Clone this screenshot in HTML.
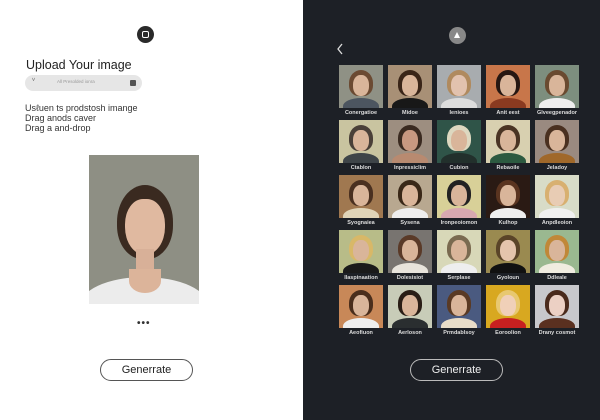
<!DOCTYPE html>
<html><head><meta charset="utf-8"><style>
*{margin:0;padding:0;box-sizing:border-box}
body{width:600px;height:420px;overflow:hidden;font-family:"Liberation Sans",sans-serif;background:#fff;position:relative}
.left{position:absolute;left:0;top:0;width:303px;height:420px;background:#fff}
.right{position:absolute;left:303px;top:0;width:297px;height:420px;background:#1d2026}
.ic{position:absolute;width:17px;height:17px;border-radius:50%}
h1{position:absolute;left:26px;top:58px;font-size:12.5px;font-weight:normal;color:#222}
.search{position:absolute;left:25px;top:75px;width:117px;height:16px;border-radius:8px;background:#e6e6e6}
.txt{position:absolute;left:25px;top:103px;font-size:9px;line-height:10px;color:#333}
.por{position:absolute;left:89px;top:155px;width:110px;height:149px;background:#8e8f84;overflow:hidden}
.dots{position:absolute;left:137px;top:318px;font-size:10px;letter-spacing:1px;color:#333;font-weight:bold}
.btn{position:absolute;top:359px;width:93px;height:22px;border-radius:11px;font-size:11px;text-align:center;line-height:20px}
.t{position:absolute;width:44px;height:43px;overflow:hidden}
.t .h{position:absolute;left:10px;top:5px;width:24px;height:26px;border-radius:50% 50% 40% 40%}
.t .f{position:absolute;left:14px;top:10px;width:16px;height:21px;border-radius:45%;background:#d9b59a}
.t .s{position:absolute;left:4px;top:33px;width:36px;height:16px;border-radius:50% 50% 0 0}
.l{position:absolute;width:60px;text-align:center;font-size:5.5px;color:#ddd;font-weight:bold}
</style></head><body>
<div class="left">
 <div class="ic" style="left:137px;top:26px;background:#2a2a2a"><div style="position:absolute;left:5px;top:5px;width:7px;height:7px;border:1.5px solid #fff;border-radius:2px"></div></div>
 <h1>Upload Your image</h1>
 <div class="search"><span style="position:absolute;left:7px;top:2px;font-size:7px;color:#555">ⱽ</span><span style="position:absolute;left:32px;top:4px;font-size:4.5px;color:#999">All  Presolded ionra</span><div style="position:absolute;left:105px;top:5px;width:6px;height:6px;background:#555;border-radius:1px"></div></div>
 <div class="txt">Usℓuen ts prodstosh imange<br>Drag anods caver<br>Drag a and-drop</div>
 <div class="por">
  <div style="position:absolute;left:28px;top:30px;width:56px;height:74px;border-radius:50% 50% 45% 45%;background:#3a2a20"></div>
  <div style="position:absolute;left:36px;top:44px;width:40px;height:56px;border-radius:45% 45% 50% 50%;background:#e0b9a0"></div>
  <div style="position:absolute;left:47px;top:94px;width:18px;height:30px;background:#d8b098"></div>
  <div style="position:absolute;left:-10px;top:122px;width:130px;height:60px;border-radius:50% 50% 0 0;background:#ececec"></div>
  <div style="position:absolute;left:40px;top:114px;width:32px;height:24px;border-radius:0 0 50% 50%;background:#dcb49a"></div>
 </div>
 <div class="dots">•••</div>
 <div class="btn" style="left:100px;border:1px solid #555;color:#222;background:#fff">Generrate</div>
</div>
<div class="right">
 <div class="ic" style="left:146px;top:27px;background:#888"><div style="position:absolute;left:5px;top:5px;width:0;height:0;border-left:3.5px solid transparent;border-right:3.5px solid transparent;border-bottom:6px solid #fff"></div></div>
 <svg style="position:absolute;left:33px;top:42px" width="8" height="14" viewBox="0 0 8 14"><path d="M6 2 L2 7 L6 12" stroke="#ddd" stroke-width="1.3" fill="none"/></svg>

 <div class="t" style="left:36px;top:65px;background:#8f9185"><div class="h" style="background:#6b4a32"></div><div class="f"></div><div class="s" style="background:#4c5560"></div></div>
 <div class="t" style="left:85px;top:65px;background:#a89076"><div class="h" style="background:#3a2518"></div><div class="f"></div><div class="s" style="background:#181818"></div></div>
 <div class="t" style="left:134px;top:65px;background:#a8acaf"><div class="h" style="background:#b08a5e"></div><div class="f" style="background:#e2c2ae"></div><div class="s" style="background:#ddd"></div></div>
 <div class="t" style="left:183px;top:65px;background:#c8764a"><div class="h" style="background:#261712"></div><div class="f"></div><div class="s" style="background:#8a3a20"></div></div>
 <div class="t" style="left:232px;top:65px;background:#7d8e7e"><div class="h" style="background:#6a4a30"></div><div class="f"></div><div class="s" style="background:#eee"></div></div>
 <div class="l" style="left:28px;top:110px">Conergatioe</div><div class="l" style="left:77px;top:110px">Midoe</div><div class="l" style="left:126px;top:110px">Ienioes</div><div class="l" style="left:175px;top:110px">Anit eest</div><div class="l" style="left:224px;top:110px">Glveegpenador</div>

 <div class="t" style="left:36px;top:120px;background:#c9c4a0"><div class="h" style="background:#4a4038"></div><div class="f"></div><div class="s" style="background:#3e4448"></div></div>
 <div class="t" style="left:85px;top:120px;background:#9d8e80"><div class="h" style="background:#3a2a20"></div><div class="f" style="background:#c89880"></div><div class="s" style="background:#b88a70"></div></div>
 <div class="t" style="left:134px;top:120px;background:#2f5448"><div class="h" style="background:#ddd8c0"></div><div class="f"></div><div class="s" style="background:#22302c"></div></div>
 <div class="t" style="left:183px;top:120px;background:#d8d0b0"><div class="h" style="background:#4a3424"></div><div class="f"></div><div class="s" style="background:#2c5a40"></div></div>
 <div class="t" style="left:232px;top:120px;background:#9a8a80"><div class="h" style="background:#4a3020"></div><div class="f"></div><div class="s" style="background:#a0682a"></div></div>
 <div class="l" style="left:28px;top:165px">Ctablon</div><div class="l" style="left:77px;top:165px">Inpressiclim</div><div class="l" style="left:126px;top:165px">Cubion</div><div class="l" style="left:175px;top:165px">Rebaoile</div><div class="l" style="left:224px;top:165px">Jeladoy</div>

 <div class="t" style="left:36px;top:175px;background:#a07850"><div class="h" style="background:#4a3020"></div><div class="f"></div><div class="s" style="background:#e0d4b8"></div></div>
 <div class="t" style="left:85px;top:175px;background:#b8a890"><div class="h" style="background:#3a2818"></div><div class="f"></div><div class="s" style="background:#eee"></div></div>
 <div class="t" style="left:134px;top:175px;background:#d8d098"><div class="h" style="background:#222"></div><div class="f"></div><div class="s" style="background:#d8a8b0"></div></div>
 <div class="t" style="left:183px;top:175px;background:#2a1a14"><div class="h" style="background:#5a3420"></div><div class="f"></div><div class="s" style="background:#eee"></div></div>
 <div class="t" style="left:232px;top:175px;background:#d8dcc8"><div class="h" style="background:#d8b070"></div><div class="f" style="background:#e8ccb4"></div><div class="s" style="background:#f0f0f0"></div></div>
 <div class="l" style="left:28px;top:220px">Syognaiea</div><div class="l" style="left:77px;top:220px">Sysena</div><div class="l" style="left:126px;top:220px">Ironpeoiomon</div><div class="l" style="left:175px;top:220px">Kulhop</div><div class="l" style="left:224px;top:220px">Anpdleoion</div>

 <div class="t" style="left:36px;top:230px;background:#b8bc88"><div class="h" style="background:#d8b868"></div><div class="f"></div><div class="s" style="background:#1a1a1a"></div></div>
 <div class="t" style="left:85px;top:230px;background:#787470"><div class="h" style="background:#5a3a28"></div><div class="f"></div><div class="s" style="background:#e8e4dc"></div></div>
 <div class="t" style="left:134px;top:230px;background:#d8d8b8"><div class="h" style="background:#7a6a50"></div><div class="f"></div><div class="s" style="background:#eee"></div></div>
 <div class="t" style="left:183px;top:230px;background:#9a8a50"><div class="h" style="background:#5a4428"></div><div class="f" style="background:#e4c4ac"></div><div class="s" style="background:#111"></div></div>
 <div class="t" style="left:232px;top:230px;background:#9ab890"><div class="h" style="background:#c08838"></div><div class="f"></div><div class="s" style="background:#f0ece0"></div></div>
 <div class="l" style="left:28px;top:275px">Ilaspinaation</div><div class="l" style="left:77px;top:275px">Dolesisiot</div><div class="l" style="left:126px;top:275px">Serplase</div><div class="l" style="left:175px;top:275px">Gyoloun</div><div class="l" style="left:224px;top:275px">Ddleale</div>

 <div class="t" style="left:36px;top:285px;background:#c88858"><div class="h" style="background:#4a2e1c"></div><div class="f"></div><div class="s" style="background:#eee"></div></div>
 <div class="t" style="left:85px;top:285px;background:#c8ccb8"><div class="h" style="background:#2a1e16"></div><div class="f"></div><div class="s" style="background:#2a2e30"></div></div>
 <div class="t" style="left:134px;top:285px;background:#4a5a80"><div class="h" style="background:#5a3a24"></div><div class="f"></div><div class="s" style="background:#e8dcc8"></div></div>
 <div class="t" style="left:183px;top:285px;background:#d8a820"><div class="h" style="background:#e8c870"></div><div class="f" style="background:#f0d0b8"></div><div class="s" style="background:#c82020"></div></div>
 <div class="t" style="left:232px;top:285px;background:#c8c8cc"><div class="h" style="background:#4a2a1c"></div><div class="f" style="background:#ecd0c4"></div><div class="s" style="background:#5a3020"></div></div>
 <div class="l" style="left:28px;top:330px">Aeofiuon</div><div class="l" style="left:77px;top:330px">Aerloson</div><div class="l" style="left:126px;top:330px">Prmdablsoy</div><div class="l" style="left:175px;top:330px">Eoroolion</div><div class="l" style="left:224px;top:330px">Drany cosmot</div>

 <div class="btn" style="left:107px;border:1px solid #bbb;color:#eee">Generrate</div>
</div>
</body></html>
